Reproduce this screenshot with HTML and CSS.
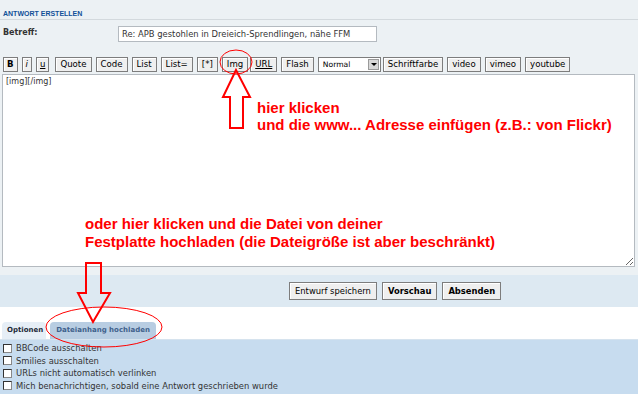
FILE: index.html
```html
<!DOCTYPE html>
<html lang="de">
<head>
    <meta charset="UTF-8">
    <title>Antwort erstellen</title>
    <link rel="stylesheet" href="styles.css">
</head>
<body>
    <div class="page">
        <div class="post-panel">
            <h3 class="panel-title">Antwort erstellen</h3>

            <div class="field-row">
                <label class="field-label" for="subject">Betreff:</label>
                <input class="field-input" id="subject" type="text" value="Re: APB gestohlen in Dreieich-Sprendlingen, nähe FFM">
            </div>

            <div class="toolbar">
                <span class="bb-btn bold narrow">B</span>
                <span class="bb-btn italic narrow">i</span>
                <span class="bb-btn under narrow">u</span>
                <span class="bb-btn gap-wide">Quote</span>
                <span class="bb-btn">Code</span>
                <span class="bb-btn">List</span>
                <span class="bb-btn">List=</span>
                <span class="bb-btn">[*]</span>
                <span class="bb-btn">Img</span>
                <span class="bb-btn under gap-tight">URL</span>
                <span class="bb-btn">Flash</span>
                <span class="fake-select">Normal<span class="select-arrow"></span></span>
                <span class="bb-btn gap-tight">Schriftfarbe</span>
                <span class="bb-btn">video</span>
                <span class="bb-btn">vimeo</span>
                <span class="bb-btn">youtube</span>
            </div>

            <textarea class="message-box">[img][/img]</textarea>
        </div>

        <div class="submit-bar">
            <span class="submit-btn">Entwurf speichern</span>
            <span class="submit-btn strong">Vorschau</span>
            <span class="submit-btn strong">Absenden</span>
        </div>

        <div class="tabs">
            <span class="tab active">Optionen</span>
            <span class="tab">Dateianhang hochladen</span>
        </div>

        <div class="options">
            <label class="option"><input type="checkbox"> BBCode ausschalten</label>
            <label class="option"><input type="checkbox"> Smilies ausschalten</label>
            <label class="option"><input type="checkbox"> URLs nicht automatisch verlinken</label>
            <label class="option"><input type="checkbox"> Mich benachrichtigen, sobald eine Antwort geschrieben wurde</label>
        </div>

        <!-- red hints drawn on top of the form -->
        <svg class="marks" width="638" height="394" viewBox="0 0 638 394">
            <ellipse cx="236" cy="62" rx="16" ry="12" fill="none" stroke="#f00" stroke-width="1"/>
            <polygon points="236,70 223,97 230,97 230,128 243,128 243,97 250,97" fill="none" stroke="#f00" stroke-width="2"/>
            <polygon points="86,263 101,263 101,293 110,293 93,322 78,293 86,293" fill="none" stroke="#f00" stroke-width="2"/>
            <ellipse cx="104" cy="327" rx="58" ry="20" fill="none" stroke="#f00" stroke-width="1"/>
        </svg>
        <div class="hint hint-img">hier klicken<br>und die www... Adresse einfügen (z.B.: von Flickr)</div>
        <div class="hint hint-upload">oder hier klicken und die Datei von deiner<br>Festplatte hochladen (die Dateigröße ist aber beschränkt)</div>
    </div>
</body>
</html>
```

FILE: styles.css
```css
body {
    margin: 0;
    font-family: "DejaVu Sans", Verdana, sans-serif;
    background-color: #fff;
}

.page {
    position: relative;
    width: 638px;
    height: 394px;
    overflow: hidden;
}

.post-panel {
    background-color: #ecf1f4;
    padding-bottom: 8px;
}

.panel-title {
    margin: 0;
    padding: 8px 0 0 3px;
    height: 11px;
    line-height: 11px;
    font-family: "Liberation Sans", Arial, sans-serif;
    font-size: 7px;
    font-weight: bold;
    text-transform: uppercase;
    color: #115098;
    border-bottom: 1px solid #d3d9dd;
}

.field-row {
    display: flex;
    align-items: center;
    margin-top: 6px;
    height: 16px;
}

.field-label {
    width: 115px;
    padding-left: 3px;
    font-size: 8px;
    font-weight: bold;
    color: #333;
    margin-top: -3px;
}

.field-input {
    box-sizing: border-box;
    width: 259px;
    height: 16px;
    margin: 0;
    padding: 0 3px;
    border: 1px solid #b4bac0;
    background: #fff;
    font-family: "DejaVu Sans", Verdana, sans-serif;
    font-size: 8.4px;
    color: #333;
}

.toolbar {
    display: flex;
    gap: 4px;
    margin-top: 15px;
    padding-left: 3px;
    height: 15px;
}

.bb-btn {
    box-sizing: border-box;
    height: 15px;
    padding: 0 4px;
    line-height: 13px;
    font-size: 8.6px;
    color: #000;
    background-color: #efefef;
    border: 1px solid #7d7d7d;
    box-shadow: inset 1px 1px 0 #fff;
    white-space: nowrap;
}

.bb-btn.narrow { padding: 0 3px; }
.bb-btn.bold { font-weight: bold; }
.bb-btn.italic { font-style: italic; }
.bb-btn.under { text-decoration: underline; }
.bb-btn.gap-wide { margin-left: 2px; }
.bb-btn.gap-tight { margin-left: -2px; }

.fake-select {
    box-sizing: border-box;
    display: flex;
    justify-content: space-between;
    align-items: center;
    width: 63px;
    height: 15px;
    padding: 0 1px 0 4px;
    font-size: 7.6px;
    background: #fff;
    border: 1px solid #7d7d7d;
}

.select-arrow {
    position: relative;
    width: 11px;
    height: 11px;
    background: #d8d8d8;
    border: 1px solid #9a9a9a;
    box-sizing: border-box;
}

.select-arrow::after {
    content: '';
    position: absolute;
    left: 2px;
    top: 3px;
    border-left: 3px solid transparent;
    border-right: 3px solid transparent;
    border-top: 3px solid #000;
}

.message-box {
    display: block;
    box-sizing: border-box;
    width: 633px;
    height: 193px;
    margin: 2px 0 0 2px;
    padding: 2px 3px;
    border: 1px solid #b4bac0;
    background: #fff;
    font-family: "DejaVu Sans", Verdana, sans-serif;
    font-size: 8px;
    color: #333;
    resize: both;
    outline: none;
}

.submit-bar {
    display: flex;
    gap: 5px;
    height: 32px;
    box-sizing: border-box;
    padding: 7px 0 0 289px;
    background-color: #dde9f2;
}

.submit-btn {
    box-sizing: border-box;
    height: 18px;
    padding: 0 5px;
    line-height: 16px;
    font-size: 8.4px;
    color: #000;
    background-color: #efefef;
    border: 1px solid #7d7d7d;
    box-shadow: inset 1px 1px 0 #fff;
}

.submit-btn.strong { font-weight: bold; }

.tabs {
    display: flex;
    gap: 4px;
    padding: 15px 0 0 2px;
    height: 17px;
}

.tab {
    padding: 0 6px;
    line-height: 17px;
    font-size: 7px;
    font-weight: bold;
    color: #3f618c;
    background-color: #b8cde2;
    border-radius: 4px 4px 0 0;
}

.tab.active {
    padding: 0 3px 0 5px;
    color: #1d2a38;
    background-color: #e6eef6;
}

.options {
    height: 56px;
    box-sizing: border-box;
    padding-top: 2px;
    background-color: #c7dcef;
    border-top: 1px solid #d6e3ee;
}

.option {
    display: flex;
    align-items: center;
    height: 12.5px;
    padding-left: 3px;
    font-size: 8.4px;
    color: #333;
}

.option input {
    appearance: none;
    width: 9px;
    height: 9px;
    margin: 0 4px 0 0;
    background: #fff;
    border: 1px solid #333;
    border-right-color: #888;
    border-bottom-color: #888;
}

.marks {
    position: absolute;
    left: 0;
    top: 0;
    pointer-events: none;
}

.hint {
    position: absolute;
    font-family: "Liberation Sans", Arial, sans-serif;
    font-size: 15px;
    font-weight: bold;
    color: #f00;
    white-space: nowrap;
}

.hint-img {
    left: 257px;
    top: 99px;
    line-height: 17px;
}

.hint-upload {
    left: 85px;
    top: 215px;
    line-height: 18px;
}
```
